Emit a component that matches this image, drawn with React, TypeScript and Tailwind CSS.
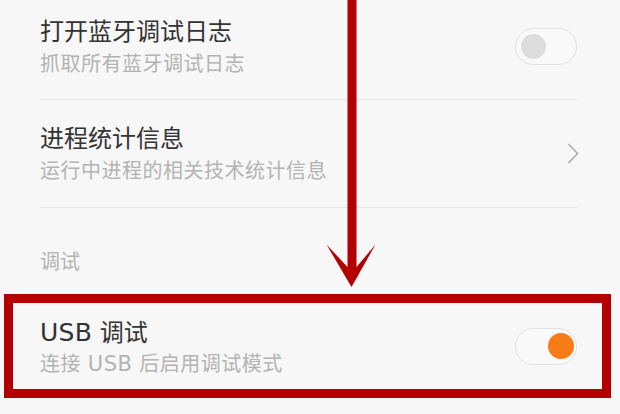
import React from 'react';

const font = { fontFamily: '"DejaVu Sans", "Noto Sans CJK SC", sans-serif' };

const Toggle: React.FC<{ on?: boolean }> = ({ on }) => (
  <div
    className={`w-[62px] h-[37px] rounded-full border-[1.5px] bg-[#f9f9f9] flex items-center ${
      on ? 'justify-end pr-[2px] border-[#dde2e6]' : 'justify-start pl-[5px] border-[#e0e0e0]'
    }`}
  >
    <div className={`rounded-full ${on ? 'w-[26px] h-[26px] bg-[#f77b17]' : 'w-[25px] h-[25px] bg-[#dcdcdc]'}`} />
  </div>
);

const Chevron = () => (
  <svg width="12" height="21" viewBox="0 0 12 21" fill="none">
    <polyline points="1.5,1 10.5,10.5 1.5,20" stroke="#a9a9a9" strokeWidth="1.5" strokeLinejoin="miter" />
  </svg>
);

const App: React.FC = () => {
  return (
    <div className="relative w-[620px] h-[414px] overflow-hidden bg-[#f7f7f7]" style={font}>
      {/* Bluetooth log */}
      <div className="ml-[40px] mr-[43px] h-[100px] pt-[16px] border-b border-[#e6e6e6] flex justify-between items-start">
        <div>
          <div className="text-[24px] leading-[32px] text-[#333333]">打开蓝牙调试日志</div>
          <div className="text-[20px] leading-[33px] tracking-[0.5px] text-[#b3b3b3]">抓取所有蓝牙调试日志</div>
        </div>
        <div className="mt-[12px]">
          <Toggle />
        </div>
      </div>

      {/* Process stats */}
      <div className="ml-[40px] mr-[43px] h-[108px] pt-[23px] border-b border-[#e6e6e6] flex justify-between items-start">
        <div>
          <div className="text-[24px] leading-[32px] text-[#333333]">进程统计信息</div>
          <div className="text-[20px] leading-[33px] tracking-[0.5px] text-[#b3b3b3]">运行中进程的相关技术统计信息</div>
        </div>
        <div className="mt-[20px] mr-[-2px]">
          <Chevron />
        </div>
      </div>

      {/* Section header */}
      <div className="pl-[40px] pt-[40px] pb-[18px] text-[20px] leading-[28px] text-[#b3b3b3]">调试</div>

      {/* USB debugging, highlighted */}
      <div className="ml-[4px] mr-[9px] h-[104px] border-[9px] border-[#b30000] pl-[27px] pr-[25px] flex items-center justify-between">
        <div className="pt-[3px]">
          <div className="text-[24px] leading-[32px] text-[#333333]">
            <span className="text-[25px] tracking-[0.3px]">USB</span> 调试
          </div>
          <div className="text-[20px] leading-[30px] tracking-[0.5px] text-[#b3b3b3]">
            连接 <span className="text-[21px] tracking-[0.5px]">USB</span> 后启用调试模式
          </div>
        </div>
        <Toggle on />
      </div>

      {/* Annotation arrow */}
      <svg className="absolute inset-0 pointer-events-none" width="620" height="414" viewBox="0 0 620 414">
        <path
          d="M347.5 0 L347.5 267 L326.5 244.5 L351.5 287 L375.5 244.5 L356.5 267 L356.5 0 Z"
          fill="#b30000"
        />
      </svg>
    </div>
  );
};

export default App;
